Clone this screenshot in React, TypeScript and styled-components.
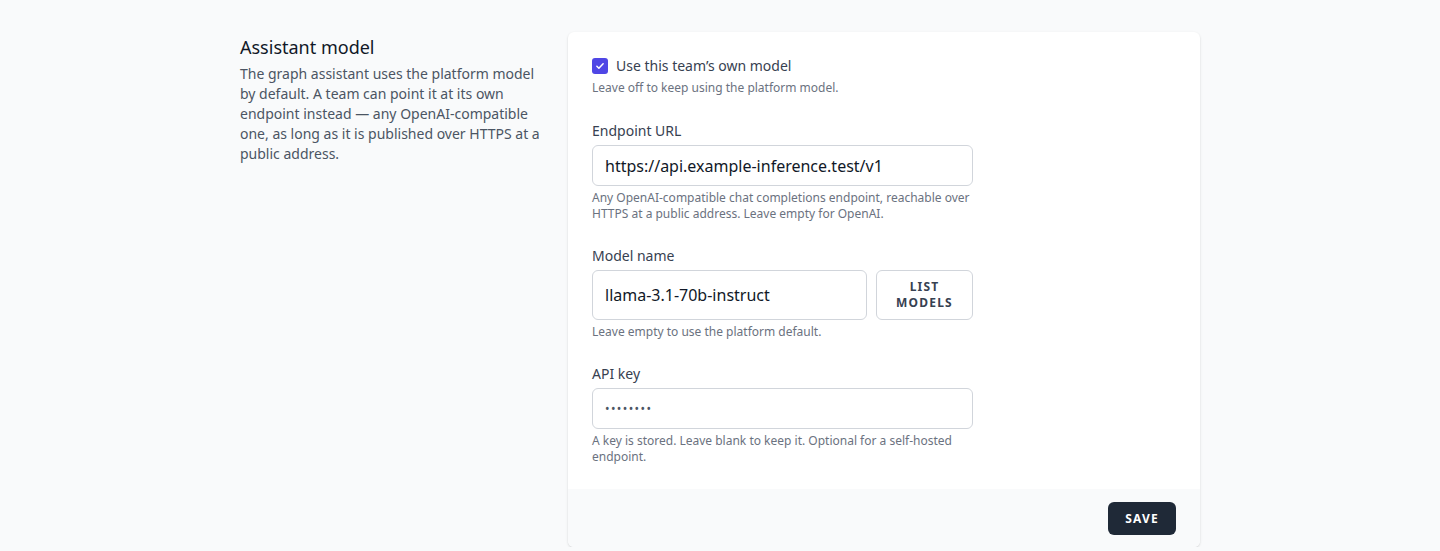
import styled, { createGlobalStyle } from 'styled-components';

const GlobalStyle = createGlobalStyle`
  html, body {
    margin: 0;
    padding: 0;
    background: #f9fafb;
    font-family: 'Noto Sans', 'Liberation Sans', sans-serif;
  }
  * {
    box-sizing: border-box;
  }
`;

const Page = styled.div`
  width: 960px;
  margin: 0 auto;
  padding-top: 32px;
  display: grid;
  grid-template-columns: repeat(3, 1fr);
  gap: 24px;
`;

const Intro = styled.div`
  padding-top: 3px;
`;

const Heading = styled.h3`
  margin: 0;
  font-size: 18px;
  line-height: 24px;
  font-weight: 400;
  color: #111827;
`;

const Description = styled.p`
  margin: 5px 0 0;
  font-size: 14px;
  line-height: 20px;
  color: #4b5563;
`;

const Card = styled.form`
  grid-column: span 2;
  background: #fff;
  border-radius: 6px;
  box-shadow: 0 1px 3px rgba(0, 0, 0, 0.1), 0 1px 2px rgba(0, 0, 0, 0.06);
  overflow: hidden;
`;

const CardBody = styled.div`
  padding: 24px;
  display: flex;
  flex-direction: column;
  gap: 24px;
`;

const Field = styled.div`
  display: flex;
  flex-direction: column;
  width: 381px;
`;

const CheckRow = styled.label`
  display: flex;
  align-items: center;
  gap: 8px;
  font-size: 14px;
  line-height: 20px;
  color: #374151;
`;

const CheckBox = styled.span`
  width: 16px;
  height: 16px;
  border-radius: 3px;
  background: #4f46e5;
  display: flex;
  align-items: center;
  justify-content: center;
`;

const Label = styled.label`
  font-size: 14px;
  line-height: 20px;
  color: #374151;
`;

const Hint = styled.p<{ $lead?: boolean }>`
  margin: ${({ $lead }) => ($lead ? '4px 0 1px' : '4px 0 0')};
  font-size: 12px;
  line-height: 16px;
  color: #6b7280;
`;

const InputRow = styled.div`
  margin-top: 4px;
  display: flex;
  gap: 9px;
`;

const TextInput = styled.input<{ $secret?: boolean }>`
  flex: 1;
  min-width: 0;
  height: ${({ $secret }) => ($secret ? '41px' : 'auto')};
  min-height: 41px;
  padding: 0 12px;
  border: 1px solid #d1d5db;
  border-radius: 6px;
  font-family: inherit;
  font-size: ${({ $secret }) => ($secret ? '12px' : '16px')};
  letter-spacing: ${({ $secret }) => ($secret ? '1.4px' : '0')};
  color: ${({ $secret }) => ($secret ? '#4b5563' : '#111827')};
  outline: none;
  background: #fff;
`;

const GhostButton = styled.button`
  width: 97px;
  padding: 8px 10px;
  background: #fff;
  border: 1px solid #d1d5db;
  border-radius: 6px;
  font-family: inherit;
  font-size: 12px;
  line-height: 16px;
  font-weight: 700;
  letter-spacing: 0.1em;
  text-transform: uppercase;
  color: #374151;
`;

const Footer = styled.div`
  background: #f9fafb;
  padding: 13px 24px 12px;
  display: flex;
  justify-content: flex-end;
`;

const PrimaryButton = styled.button`
  padding: 8px 17px;
  background: #1f2937;
  border: none;
  border-radius: 6px;
  font-family: inherit;
  font-size: 12px;
  line-height: 17px;
  font-weight: 700;
  letter-spacing: 0.1em;
  text-transform: uppercase;
  color: #fff;
`;

export default function App() {
  return (
    <>
      <GlobalStyle />
      <Page>
        <Intro>
          <Heading>Assistant model</Heading>
          <Description>
            The graph assistant uses the platform model by default. A team can point it at its own
            endpoint instead — any OpenAI-compatible one, as long as it is published over HTTPS at a
            public address.
          </Description>
        </Intro>

        <Card onSubmit={(e) => e.preventDefault()}>
          <CardBody>
            <Field>
              <CheckRow>
                <CheckBox>
                  <svg width="10" height="10" viewBox="0 0 16 16" fill="none">
                    <path d="M3 8.5l3.2 3L13 4.5" stroke="#fff" strokeWidth="2.4" strokeLinecap="round" strokeLinejoin="round" />
                  </svg>
                </CheckBox>
                Use this team’s own model
              </CheckRow>
              <Hint $lead>Leave off to keep using the platform model.</Hint>
            </Field>

            <Field>
              <Label htmlFor="endpoint">Endpoint URL</Label>
              <InputRow>
                <TextInput id="endpoint" defaultValue="https://api.example-inference.test/v1" />
              </InputRow>
              <Hint>
                Any OpenAI-compatible chat completions endpoint, reachable over HTTPS at a public
                address. Leave empty for OpenAI.
              </Hint>
            </Field>

            <Field>
              <Label htmlFor="model">Model name</Label>
              <InputRow>
                <TextInput id="model" defaultValue="llama-3.1-70b-instruct" />
                <GhostButton type="button">List models</GhostButton>
              </InputRow>
              <Hint>Leave empty to use the platform default.</Hint>
            </Field>

            <Field>
              <Label htmlFor="apikey">API key</Label>
              <InputRow>
                <TextInput id="apikey" type="password" $secret defaultValue="secretky" />
              </InputRow>
              <Hint>A key is stored. Leave blank to keep it. Optional for a self-hosted endpoint.</Hint>
            </Field>
          </CardBody>
          <Footer>
            <PrimaryButton type="submit">Save</PrimaryButton>
          </Footer>
        </Card>
      </Page>
    </>
  );
}
